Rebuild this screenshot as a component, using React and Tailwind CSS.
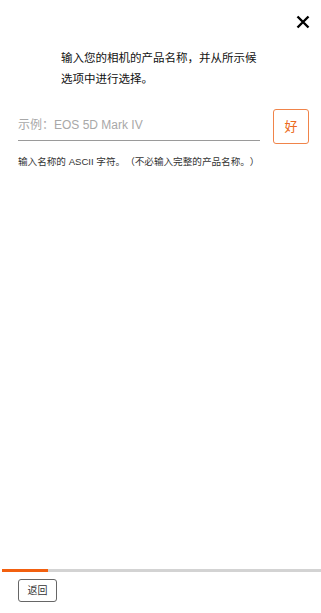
import { useState } from 'react';

export default function App() {
  const [name, setName] = useState('');

  return (
    <div className="h-screen w-full bg-white flex flex-col text-[#222] [text-spacing-trim:space-all] font-['Liberation_Sans','Noto_Sans_CJK_SC',sans-serif]">
      <div className="flex justify-end pt-[15px] pr-[10px]">
        <button className="w-[14px] h-[14px] flex items-center justify-center mr-[1px]">
          <svg viewBox="0 0 14 14" className="w-[14px] h-[14px]">
            <path d="M1.5 1.5 L12.5 12.5 M12.5 1.5 L1.5 12.5" stroke="#000" strokeWidth="2.4" />
          </svg>
        </button>
      </div>

      <p className="mt-[19px] pl-[61px] pr-[60px] text-[11.5px] leading-[21px] text-[#111]">
        输入您的相机的产品名称，并从所示候选项中进行选择。
      </p>

      <div className="mt-[19px] flex items-start pl-[18px] pr-[12px]">
        <div className="flex-1 pt-[1px]">
          <input
            value={name}
            onChange={(e) => setName(e.target.value)}
            placeholder="示例：EOS 5D Mark IV"
            className="w-full h-[31px] text-[12px] text-[#333] placeholder:text-[#a8a8a8] outline-none border-b-[1.5px] border-[#9a9a9a] bg-transparent"
          />
        </div>
        <button className="ml-[13px] w-[36px] h-[35px] border border-[#f0844a] rounded-[3px] text-[13px] text-[#ec6a20] flex items-center justify-center">
          好
        </button>
      </div>

      <p className="mt-[11px] pl-[18px] text-[9.6px] leading-[14px] text-[#333] whitespace-nowrap">
        输入名称的 ASCII 字符。（不必输入完整的产品名称。）
      </p>

      <div className="flex-1" />

      <div className="pl-[2px]">
        <div className="h-[3px] bg-[#d3d3d3] flex">
          <div className="w-[46px] h-full bg-[#f2600f]" />
        </div>
      </div>

      <div className="pl-[18px] pt-[7px] pb-[11px]">
        <button className="w-[39px] h-[23px] border border-[#666] rounded-[3px] text-[10px] text-[#333] flex items-center justify-center">
          返回
        </button>
      </div>
    </div>
  );
}
